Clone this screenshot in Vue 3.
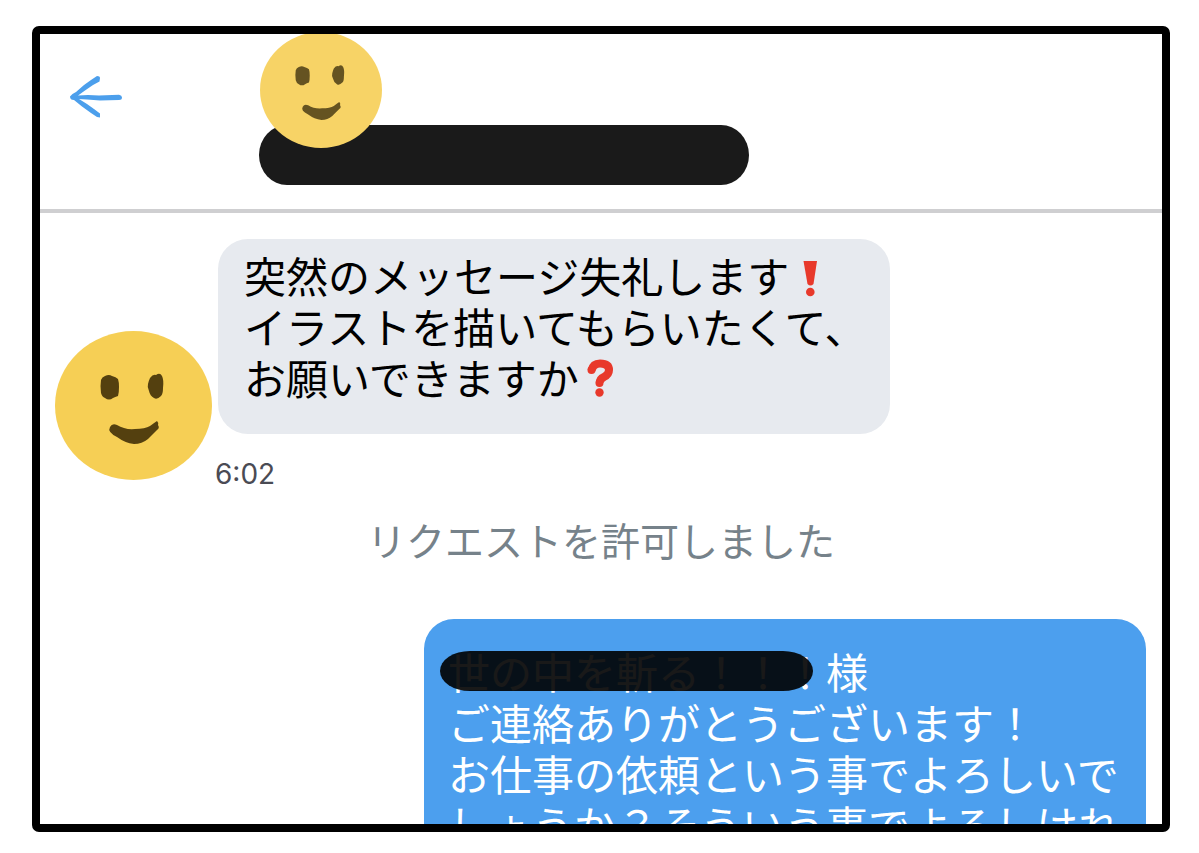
<script setup>
const incoming = {
  lines: [
    { text: '突然のメッセージ失礼します', mark: 'exclaim' },
    { text: 'イラストを描いてもらいたくて、' },
    { text: 'お願いできますか', mark: 'question' },
  ],
  time: '6:02',
}
const outgoing = {
  name: '世の中を斬る！！！',
  honorific: '様',
  lines: [
    'ご連絡ありがとうございます！',
    'お仕事の依頼という事でよろしいで',
    'しょうか？そういう事でよろしけれ',
  ],
}
const facePaths = [
  'M46 49 Q47 46 50 45 Q54 43 57 45 Q61 46 63 48 Q64 51 64 56 Q64 62 63 65 Q60 66 58 67 Q54 70 50 67 Q47 66 46 62 Q45 55 46 49Z',
  'M95 47 Q98 43 101 44 Q105 41 107 45 Q109 49 108 57 Q108 63 106 65 Q102 69 99 67 Q95 65 94 60 Q92 56 93 53 Q94 49 95 47Z',
  'M55 96 Q57 92 62 94 Q70 99 80 98 Q90 98 95 95 Q99 92 102 90 Q104 92 103 94 Q105 97 102 99 Q97 104 93 108 Q87 113 79 113 Q70 112 62 106 Q52 101 55 96Z',
]
</script>

<template>
  <div class="page">
    <main class="frame">
      <header class="header">
        <button class="back" type="button" aria-label="戻る">
          <svg viewBox="0 0 54 44" width="54" height="44" fill="#4c9fec">
            <path d="M1 21.500 Q3 18.500 7 17 L15 10 L22 5 L28 1 Q31 1 31 3 L30.500 6.500 L24 10 L16 15.500 L9 20.500 L19 20 L30 20.500 L50 19.800 Q53 20.500 53 22.500 Q53 25 50 25 L31 25.500 L18 24.500 L10 24 L18 29 L25 34 L31 38.500 L31 42.500 L28 42 L22 38 L13 31.500 L5 25 Q1 25 1 21.500Z" />
          </svg>
        </button>
        <div class="profile">
          <svg class="face small" viewBox="0 0 157 149" preserveAspectRatio="none" aria-hidden="true">
            <ellipse cx="78.500" cy="74.500" rx="78.500" ry="74.500" />
            <path v-for="d in facePaths" :key="d" :d="d" />
          </svg>
          <div class="hidden-name"></div>
        </div>
      </header>

      <section class="thread">
        <article class="incoming">
          <svg class="face large" viewBox="0 0 157 149" aria-hidden="true">
            <ellipse cx="78.500" cy="74.500" rx="78.500" ry="74.500" />
            <path v-for="d in facePaths" :key="d" :d="d" />
          </svg>
          <div class="column">
            <div class="bubble gray">
              <p v-for="line in incoming.lines" :key="line.text" class="line">
                <span>{{ line.text }}</span>
                <svg v-if="line.mark === 'exclaim'" class="mark" viewBox="0 0 42 42" role="img" aria-label="!">
                  <path d="M14.500 7 L28 7 L24.500 30 Q21.500 33 18.500 30Z" fill="#e8392b" />
                  <circle cx="21.300" cy="38" r="4.300" fill="#e8392b" />
                </svg>
                <svg v-if="line.mark === 'question'" class="mark" viewBox="0 0 42 42" role="img" aria-label="?">
                  <path d="M12.500 14.500 Q14 7.500 21 7.500 Q30 7.500 30 14 Q30 18.500 25 21 Q20.500 23 20.800 27" fill="none" stroke="#e8392b" stroke-width="8" />
                  <circle cx="12.500" cy="14" r="4" fill="#e8392b" />
                  <circle cx="20.500" cy="27" r="4" fill="#e8392b" />
                  <circle cx="20.500" cy="36.500" r="4.200" fill="#e8392b" />
                </svg>
              </p>
            </div>
            <time class="time">{{ incoming.time }}</time>
          </div>
        </article>

        <p class="status">リクエストを許可しました</p>

        <article class="bubble blue">
          <p class="line"><span class="redacted">{{ outgoing.name }}</span><span>{{ outgoing.honorific }}</span></p>
          <p v-for="line in outgoing.lines" :key="line" class="line">{{ line }}</p>
        </article>
      </section>
    </main>
  </div>
</template>

<style>
body {
  background: #fff;
}
</style>

<style scoped>
.page {
  box-sizing: border-box;
  height: 100vh;
  padding: 26px 29px 21px 32px;
  font-family: "Noto Sans CJK JP", sans-serif;
  text-spacing-trim: space-all;
}
.frame {
  box-sizing: border-box;
  height: 100%;
  border: 8px solid #000;
  border-radius: 7px;
  overflow: hidden;
  display: flex;
  flex-direction: column;
}
.header {
  flex: none;
  display: flex;
  align-items: flex-start;
  gap: 136px;
  padding: 0 29px 24px;
  border-bottom: 4px solid #cfcfd1;
}
.back {
  margin-top: 41px;
  padding: 0;
  border: 0;
  background: none;
  line-height: 0;
  cursor: pointer;
}
.profile {
  flex: 0 1 490px;
  display: flex;
  flex-direction: column;
}
.face {
  flex: none;
  display: block;
}
.face ellipse {
  fill: #f6cf55;
}
.face path {
  fill: #54400f;
}
.small {
  position: relative;
  z-index: 1;
  width: 122px;
  height: 116px;
  margin: -2px 0 0 1px;
}
.small ellipse {
  fill: #f7d366;
}
.small path {
  fill: #655321;
}
.hidden-name {
  height: 60px;
  margin-top: -23px;
  border-radius: 28px / 30px;
  background: #1a1a1a;
}
.thread {
  flex: none;
  display: flex;
  flex-direction: column;
}
.incoming {
  display: flex;
  align-items: flex-end;
  gap: 3px;
  padding: 26px 15px 0;
}
.large {
  width: 157px;
  height: 149px;
  margin-bottom: 10px;
}
.column {
  display: flex;
  flex-direction: column;
}
.bubble {
  font-size: 42px;
  line-height: 51px;
}
.line {
  display: flex;
  align-items: center;
  margin: 0;
}
.gray {
  margin-left: 3px;
  padding: 10px 24px 32px 26px;
  border-radius: 30px;
  background: #e7eaef;
  color: #000;
}
.mark {
  width: 42px;
  height: 42px;
  overflow: visible;
}
.time {
  margin-top: 24px;
  font-family: Inter, "Liberation Sans", sans-serif;
  font-size: 28px;
  line-height: 32px;
  color: #4a4b54;
}
.status {
  margin: 24px 0 55px;
  text-align: center;
  font-size: 39px;
  line-height: 50px;
  color: #76828a;
}
.blue {
  align-self: flex-end;
  margin-right: 16px;
  padding: 26px 26px 30px 24px;
  border-radius: 30px;
  background: #4c9fee;
  color: #fff;
}
.redacted {
  position: relative;
}
.redacted::after {
  content: "";
  position: absolute;
  top: 6px;
  right: 13px;
  bottom: 5px;
  left: -8px;
  border-radius: 30px / 20px;
  background: rgba(0, 0, 0, 0.9);
}
</style>
